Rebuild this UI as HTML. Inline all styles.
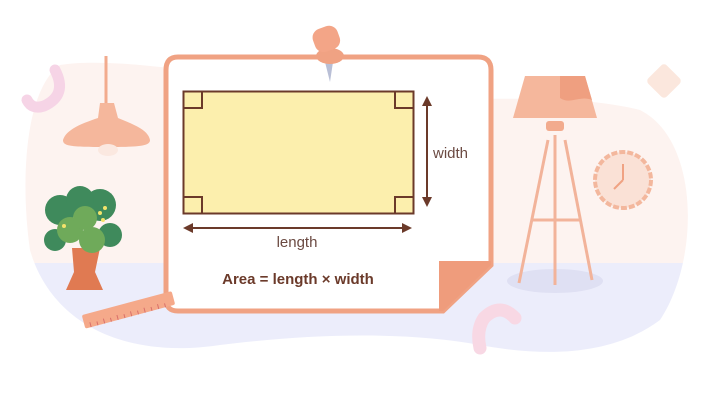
<!DOCTYPE html>
<html><head><style>body{margin:0;background:#fff}svg{display:block}text{font-family:"Liberation Sans",sans-serif}</style></head><body>
<svg width="719" height="402" viewBox="0 0 719 402" xmlns="http://www.w3.org/2000/svg">
<defs><clipPath id="blob"><path d="M60 65 C120 55 250 80 360 95 C460 105 560 90 640 110 C700 140 700 260 660 320 C620 350 560 360 480 345 C400 330 300 335 220 345 C120 360 50 320 30 250 C20 180 25 90 60 65Z"/></clipPath></defs>
<g clip-path="url(#blob)">
<rect x="0" y="0" width="719" height="263" fill="#fdf3f0"/>
<rect x="0" y="263" width="719" height="140" fill="#ecedfb"/>
</g>
<path d="M55 70 Q68 95 44 106 Q32 110 27 100" fill="none" stroke="#f6d4e6" stroke-width="11" stroke-linecap="round"/>
<path d="M515 318 Q500 302 484 318 Q476 330 480 348" fill="none" stroke="#f8d8e4" stroke-width="13" stroke-linecap="round"/>
<rect x="651" y="68" width="26" height="26" rx="4" fill="#fbe7dd" transform="rotate(45 664 81)"/>
<!-- left lamp -->
<line x1="106" y1="56" x2="106" y2="105" stroke="#f2ab8e" stroke-width="3"/>
<path d="M100 103 L114 103 L118 118 C135 125 148 130 150 140 C150 146 140 147 106 147 C70 147 63 146 63 140 C66 130 80 124 98 118Z" fill="#f5b79c"/>
<ellipse cx="108" cy="150" rx="10" ry="6" fill="#fbe8e0"/>
<!-- plant -->
<path d="M72 248 L100 248 L95 272 L103 290 L66 290 L74 272Z" fill="#e07a52"/>
<g fill="#3f8a5c"><circle cx="60" cy="210" r="15"/><circle cx="100" cy="205" r="16"/><circle cx="80" cy="200" r="14"/><circle cx="110" cy="235" r="12"/><circle cx="55" cy="240" r="11"/></g>
<g fill="#6faa5a"><circle cx="70" cy="230" r="13"/><circle cx="92" cy="240" r="13"/><circle cx="85" cy="218" r="12"/></g>
<g fill="#f4e36b"><circle cx="100" cy="213" r="2"/><circle cx="103" cy="220" r="2"/><circle cx="64" cy="226" r="2"/><circle cx="105" cy="208" r="2"/></g>
<!-- floor lamp -->
<ellipse cx="555" cy="281" rx="48" ry="12" fill="#dfe0f3"/>
<g stroke="#f2b39a" stroke-width="3"><line x1="548" y1="140" x2="519" y2="283"/><line x1="565" y1="140" x2="592" y2="280"/><line x1="555" y1="135" x2="555" y2="285"/><line x1="532" y1="220" x2="580" y2="220"/></g>
<rect x="546" y="121" width="18" height="10" rx="3" fill="#f2ab8e"/>
<path d="M525 76 L585 76 L597 118 L513 118Z" fill="#f5b79c"/>
<path d="M560 76 L585 76 L592 100 C580 95 570 105 560 98Z" fill="#ef9f80"/>
<!-- clock -->
<circle cx="623" cy="180" r="28" fill="#fae1d6" stroke="#f3b79d" stroke-width="4" stroke-dasharray="6 2"/>
<g stroke="#f0a283" stroke-width="2"><line x1="623" y1="180" x2="623" y2="164"/><line x1="623" y1="180" x2="614" y2="189"/></g>
<!-- card -->
<path d="M178 57 L478 57 Q491 57 491 70 L491 265 L443 311 L178 311 Q166 311 166 299 L166 70 Q166 57 178 57Z" fill="#fff" stroke="#f0a283" stroke-width="5"/>
<path d="M439 261 L491 261 L491 265 L443 311 L439 311Z" fill="#ef9c7c"/>
<!-- ruler -->
<g transform="rotate(-15 128 310)">
<rect x="82" y="303" width="93" height="14" rx="2" fill="#f5a98a"/>
<path d="M88 317 V312 M95 317 V313 M102 317 V312 M109 317 V313 M116 317 V312 M123 317 V313 M130 317 V312 M137 317 V313 M144 317 V312 M151 317 V313 M158 317 V312 M165 317 V313" stroke="#d9706a" stroke-width="1"/>
</g>
<!-- pin -->
<path d="M325 62 L330 82 L333 62Z" fill="#b9bfd6"/>
<ellipse cx="330" cy="56" rx="14" ry="8" fill="#f0a283"/>
<rect x="313" y="27" width="26" height="24" rx="9" fill="#f3a587" transform="rotate(-20 326 38)"/>
<!-- rectangle -->
<rect x="183.5" y="91.5" width="230" height="122" fill="#fcefad" stroke="#6b3a2a" stroke-width="2"/>
<g fill="none" stroke="#6b3a2a" stroke-width="2"><path d="M184 108 H202 V92"/><path d="M413 108 H395 V92"/><path d="M184 197 H202 V213"/><path d="M413 197 H395 V213"/></g>
<line x1="190" y1="228" x2="405" y2="228" stroke="#6b3a2a" stroke-width="2"/>
<path d="M183 228 L193 223 L193 233Z M412 228 L402 223 L402 233Z" fill="#6b3a2a"/>
<line x1="427" y1="103" x2="427" y2="200" stroke="#6b3a2a" stroke-width="2"/>
<path d="M427 96 L422 106 L432 106Z M427 207 L422 197 L432 197Z" fill="#6b3a2a"/>
<text x="297" y="247" font-size="15" fill="#6b4a42" text-anchor="middle">length</text>
<text x="433" y="158" font-size="15" fill="#6b4a42">width</text>
<text x="298" y="284" font-size="15" font-weight="bold" fill="#6b3a2a" text-anchor="middle">Area = length × width</text>
</svg>
</body></html>
